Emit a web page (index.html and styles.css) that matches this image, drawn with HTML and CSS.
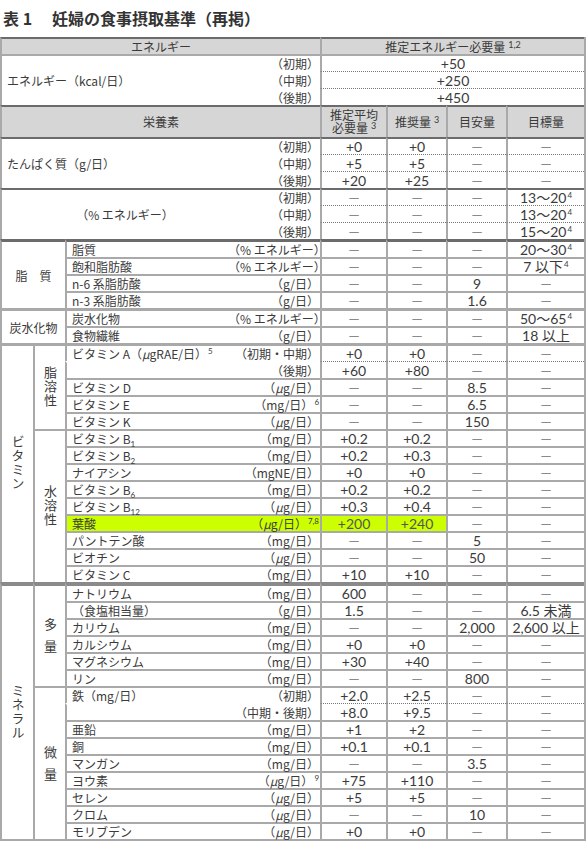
FILE: index.html
```html
<!DOCTYPE html>
<html lang="ja">
<head>
<meta charset="utf-8">
<title>妊婦の食事摂取基準</title>
<link rel="stylesheet" href="styles.css">
</head>
<body>
<h1 class="title"><span class="tno">表 1</span>妊婦の食事摂取基準（再掲）</h1>
<table class="tbl">
<colgroup><col class="w1"><col class="w2"><col class="w3"><col class="w4"><col class="w5"><col class="w6"><col class="w7"><col class="w8"></colgroup>
<tr class="g"><th colspan="4">エネルギー</th><th colspan="4">推定エネルギー必要量<sup class="hs">1,2</sup></th></tr>
<tr><td class="lb" colspan="3" rowspan="3">エネルギー（kcal/日）</td><td class="un">（初期）</td><td colspan="4">+50</td></tr>
<tr class="dr"><td class="un">（中期）</td><td colspan="4">+250</td></tr>
<tr class="dr"><td class="un">（後期）</td><td colspan="4">+450</td></tr>
<tr class="g hd2"><th colspan="4">栄養素</th><th>推定平均<br>必要量<sup class="hs">3</sup></th><th>推奨量<sup class="hs">3</sup></th><th>目安量</th><th>目標量</th></tr>
<tr class="g"><td class="lb" colspan="3" rowspan="3">たんぱく質（g/日）</td><td class="un">（初期）</td><td>+0</td><td>+0</td><td class="d">—</td><td class="d">—</td></tr>
<tr class="dr"><td class="un">（中期）</td><td>+5</td><td>+5</td><td class="d">—</td><td class="d">—</td></tr>
<tr class="dr"><td class="un">（後期）</td><td>+20</td><td>+25</td><td class="d">—</td><td class="d">—</td></tr>
<tr class="g"><td class="lb ctr" colspan="3" rowspan="3">（% エネルギー）</td><td class="un">（初期）</td><td class="d">—</td><td class="d">—</td><td class="d">—</td><td>13〜20<sup>4</sup></td></tr>
<tr class="dr"><td class="un">（中期）</td><td class="d">—</td><td class="d">—</td><td class="d">—</td><td>13〜20<sup>4</sup></td></tr>
<tr class="dr"><td class="un">（後期）</td><td class="d">—</td><td class="d">—</td><td class="d">—</td><td>15〜20<sup>4</sup></td></tr>
<tr class="g t3"><td class="grp" colspan="2" rowspan="4">脂　質</td><td class="nm">脂質</td><td class="un">（% エネルギー）</td><td class="d">—</td><td class="d">—</td><td class="d">—</td><td>20〜30<sup>4</sup></td></tr>
<tr><td class="nm">飽和脂肪酸</td><td class="un">（% エネルギー）</td><td class="d">—</td><td class="d">—</td><td class="d">—</td><td>7 以下<sup>4</sup></td></tr>
<tr><td class="nm">n-6 系脂肪酸</td><td class="un">（g/日）</td><td class="d">—</td><td class="d">—</td><td>9</td><td class="d">—</td></tr>
<tr><td class="nm">n-3 系脂肪酸</td><td class="un">（g/日）</td><td class="d">—</td><td class="d">—</td><td>1.6</td><td class="d">—</td></tr>
<tr class="t3"><td class="grp" colspan="2" rowspan="2">炭水化物</td><td class="nm">炭水化物</td><td class="un">（% エネルギー）</td><td class="d">—</td><td class="d">—</td><td class="d">—</td><td>50〜65<sup>4</sup></td></tr>
<tr><td class="nm">食物繊維</td><td class="un">（g/日）</td><td class="d">—</td><td class="d">—</td><td class="d">—</td><td>18 以上</td></tr>
<tr class="t3"><td class="grp" rowspan="14"><span class="vt">ビタミン</span></td><td class="grp" rowspan="5"><span class="vt">脂溶性</span></td><td class="nm">ビタミン A（<i>μ</i>gRAE/日）<sup>5</sup></td><td class="un">（初期・中期）</td><td>+0</td><td>+0</td><td class="d">—</td><td class="d">—</td></tr>
<tr class="dr"><td class="nm"></td><td class="un">（後期）</td><td>+60</td><td>+80</td><td class="d">—</td><td class="d">—</td></tr>
<tr><td class="nm">ビタミン D</td><td class="un">（<i>μ</i>g/日）</td><td class="d">—</td><td class="d">—</td><td>8.5</td><td class="d">—</td></tr>
<tr><td class="nm">ビタミン E</td><td class="un">（mg/日）<sup>6</sup></td><td class="d">—</td><td class="d">—</td><td>6.5</td><td class="d">—</td></tr>
<tr><td class="nm">ビタミン K</td><td class="un">（<i>μ</i>g/日）</td><td class="d">—</td><td class="d">—</td><td>150</td><td class="d">—</td></tr>
<tr><td class="grp" rowspan="9"><span class="vt">水溶性</span></td><td class="nm">ビタミン B<sub>1</sub></td><td class="un">（mg/日）</td><td>+0.2</td><td>+0.2</td><td class="d">—</td><td class="d">—</td></tr>
<tr><td class="nm">ビタミン B<sub>2</sub></td><td class="un">（mg/日）</td><td>+0.2</td><td>+0.3</td><td class="d">—</td><td class="d">—</td></tr>
<tr><td class="nm">ナイアシン</td><td class="un">（mgNE/日）</td><td>+0</td><td>+0</td><td class="d">—</td><td class="d">—</td></tr>
<tr><td class="nm">ビタミン B<sub>6</sub></td><td class="un">（mg/日）</td><td>+0.2</td><td>+0.2</td><td class="d">—</td><td class="d">—</td></tr>
<tr><td class="nm">ビタミン B<sub>12</sub></td><td class="un">（<i>μ</i>g/日）</td><td>+0.3</td><td>+0.4</td><td class="d">—</td><td class="d">—</td></tr>
<tr><td class="nm hl">葉酸</td><td class="un hl">（<i>μ</i>g/日）<sup>7,8</sup></td><td class="hl thin">+200</td><td class="hl thin">+240</td><td class="d">—</td><td class="d">—</td></tr>
<tr><td class="nm">パントテン酸</td><td class="un">（mg/日）</td><td class="d">—</td><td class="d">—</td><td>5</td><td class="d">—</td></tr>
<tr><td class="nm">ビオチン</td><td class="un">（<i>μ</i>g/日）</td><td class="d">—</td><td class="d">—</td><td>50</td><td class="d">—</td></tr>
<tr><td class="nm">ビタミン C</td><td class="un">（mg/日）</td><td>+10</td><td>+10</td><td class="d">—</td><td class="d">—</td></tr>
<tr class="t4"><td class="grp" rowspan="15"><span class="vt">ミネラル</span></td><td class="grp" rowspan="6"><span class="vt sp">多量</span></td><td class="nm">ナトリウム</td><td class="un">（mg/日）</td><td>600</td><td class="d">—</td><td class="d">—</td><td class="d">—</td></tr>
<tr><td class="nm">（食塩相当量）</td><td class="un">（g/日）</td><td>1.5</td><td class="d">—</td><td class="d">—</td><td>6.5 未満</td></tr>
<tr><td class="nm">カリウム</td><td class="un">（mg/日）</td><td class="d">—</td><td class="d">—</td><td>2,000</td><td>2,600 以上</td></tr>
<tr><td class="nm">カルシウム</td><td class="un">（mg/日）</td><td>+0</td><td>+0</td><td class="d">—</td><td class="d">—</td></tr>
<tr><td class="nm">マグネシウム</td><td class="un">（mg/日）</td><td>+30</td><td>+40</td><td class="d">—</td><td class="d">—</td></tr>
<tr><td class="nm">リン</td><td class="un">（mg/日）</td><td class="d">—</td><td class="d">—</td><td>800</td><td class="d">—</td></tr>
<tr><td class="grp" rowspan="9"><span class="vt sp">微量</span></td><td class="nm">鉄（mg/日）</td><td class="un">（初期）</td><td>+2.0</td><td>+2.5</td><td class="d">—</td><td class="d">—</td></tr>
<tr class="dr"><td class="nm"></td><td class="un">（中期・後期）</td><td>+8.0</td><td>+9.5</td><td class="d">—</td><td class="d">—</td></tr>
<tr><td class="nm">亜鉛</td><td class="un">（mg/日）</td><td>+1</td><td>+2</td><td class="d">—</td><td class="d">—</td></tr>
<tr><td class="nm">銅</td><td class="un">（mg/日）</td><td>+0.1</td><td>+0.1</td><td class="d">—</td><td class="d">—</td></tr>
<tr><td class="nm">マンガン</td><td class="un">（mg/日）</td><td class="d">—</td><td class="d">—</td><td>3.5</td><td class="d">—</td></tr>
<tr><td class="nm">ヨウ素</td><td class="un">（<i>μ</i>g/日）<sup>9</sup></td><td>+75</td><td>+110</td><td class="d">—</td><td class="d">—</td></tr>
<tr><td class="nm">セレン</td><td class="un">（<i>μ</i>g/日）</td><td>+5</td><td>+5</td><td class="d">—</td><td class="d">—</td></tr>
<tr><td class="nm">クロム</td><td class="un">（<i>μ</i>g/日）</td><td class="d">—</td><td class="d">—</td><td>10</td><td class="d">—</td></tr>
<tr><td class="nm">モリブデン</td><td class="un">（<i>μ</i>g/日）</td><td>+0</td><td>+0</td><td class="d">—</td><td class="d">—</td></tr>
</table>
</body>
</html>
```
FILE: styles.css
```css
* { box-sizing: border-box; }
html, body { margin: 0; padding: 0; background: #fff; }
body {
  width: 586px;
  font-family: "Noto Sans CJK JP", "Noto Sans", sans-serif;
  color: #3b3b3b;
}
.title {
  margin: 0;
  height: 37px;
  padding: 8px 0 0 3px;
  font-size: 16px;
  line-height: 20px;
  font-weight: bold;
  color: #333;
}
.tno { margin-right: 20px; }

.tbl {
  width: 586px;
  table-layout: fixed;
  border-collapse: separate;
  border-spacing: 0;
  border-right: 2px solid #a9a9a9;
  border-bottom: 2px solid #a9a9a9;
  font-family: Lato, "Noto Sans CJK JP", sans-serif;
  font-size: 14px;
}
.w1 { width: 33px; }
.w2 { width: 32px; }
.w3 { width: 163px; }
.w4 { width: 92px; }
.w5 { width: 66px; }
.w6 { width: 60px; }
.w7 { width: 60px; }
.w8 { width: 78px; }

.tbl td, .tbl th {
  border-left: 2px solid #a9a9a9;
  border-top: 2px solid #a9a9a9;
  padding: 0;
  line-height: 15px;
  text-align: center;
  vertical-align: middle;
  white-space: nowrap;
  font-weight: normal;
}
.tbl th {
  background: #d6d6d6;
  font-family: "Noto Sans CJK JP", sans-serif;
  font-size: 12px;
  color: #3a3a3a;
}
.g > td, .g > th { border-top-color: #6b6b6b; }
.t3 > td { border-top-width: 3px; }
.t4 > td { border-top-width: 4px; border-top-color: #8a8a8a; }
.hd2 > th { line-height: 13px; padding: 1px 0 3px; }

.dr > td { border-top: 1px dotted #777; padding-top: 1px; }
.dr > td.un, .dr > td.nm { border-top: 2px solid transparent; padding-top: 0; }

.lb, .nm, .un, .grp { font-family: "Noto Sans CJK JP", sans-serif; font-size: 12px; }
.lb { text-align: left !important; padding-left: 5px !important; }
.lb.ctr { text-align: center !important; padding-left: 20px !important; }
.nm { text-align: left !important; padding-left: 5px !important; }
.un { text-align: right !important; padding-right: 1px !important; border-left: none !important; }
.d { color: #8a8a8a; font-size: 14px; }
.hl { background: #ccff00; }
.thin { color: #555; font-weight: 300; }

.vt {
  display: inline-block;
  writing-mode: vertical-rl;
  text-orientation: upright;
  font-size: 13px;
  line-height: 14px;
  letter-spacing: 1px;
}
.vt.sp { letter-spacing: 9px; padding-top: 10px; }

i { font-style: italic; }
sup {
  font-family: Lato, sans-serif;
  font-size: 8px;
  line-height: 0;
  vertical-align: 5px;
  margin-left: 1px;
}
sup.hs { font-size: 9px; margin-left: 3px; vertical-align: 4px; }
sub {
  font-family: Lato, sans-serif;
  font-size: 8px;
  line-height: 0;
  vertical-align: -3px;
}
```
